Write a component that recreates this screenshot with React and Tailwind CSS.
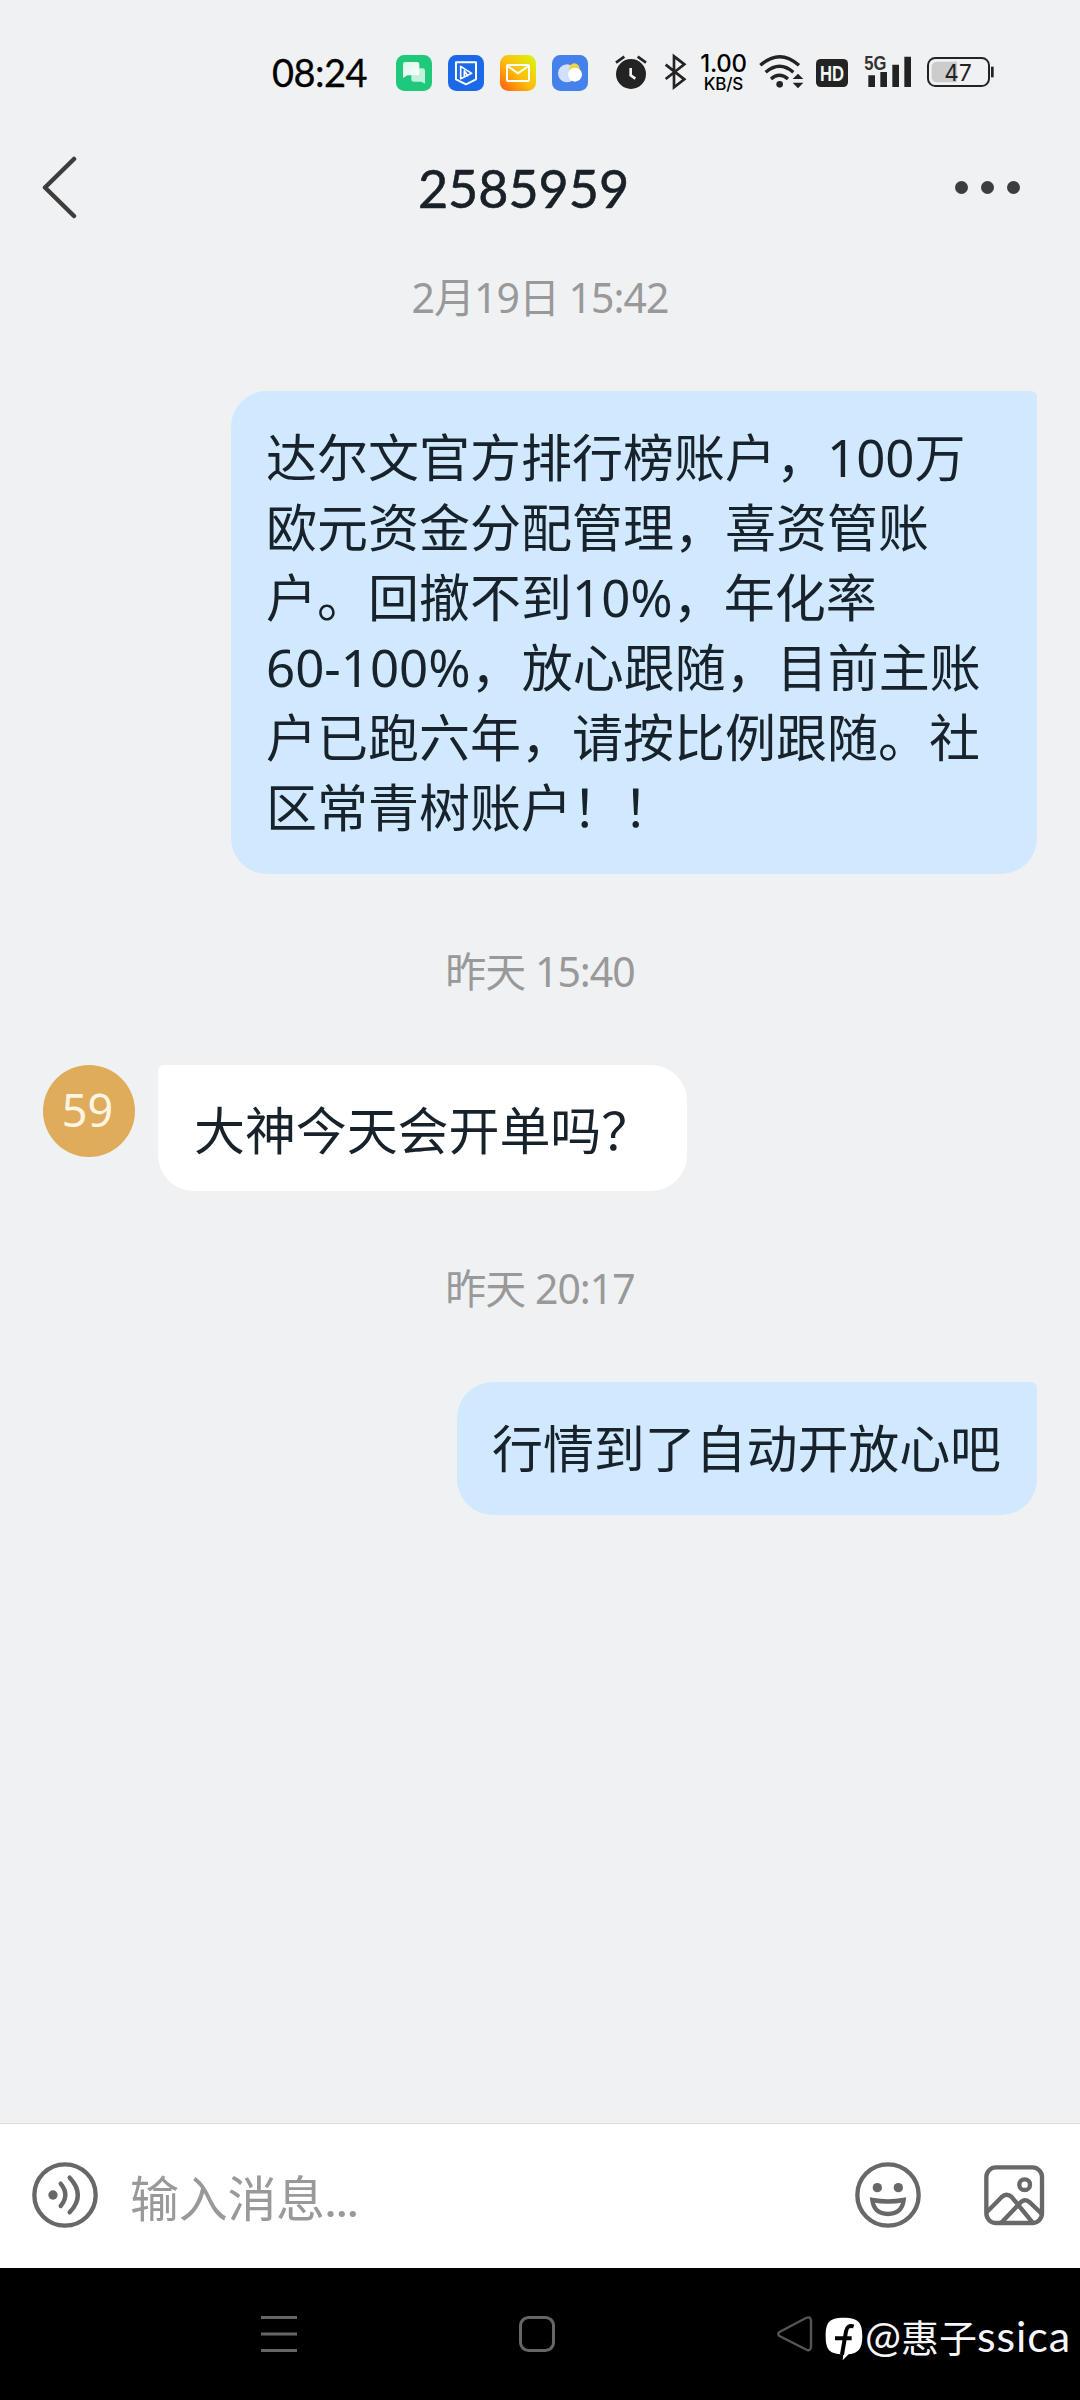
import React from 'react';

const StatusBar = () => (
  <div className="h-[70px] mt-[38px] pl-[272px] flex items-center shrink-0">
    <span className="w-[124px] pb-[2px] font-['Lato','Noto_Sans_CJK_SC',sans-serif] text-[38px] leading-none tracking-[-0.5px] text-black [-webkit-text-stroke:0.3px_#000] whitespace-nowrap">
      08:24
    </span>

    {/* Notification icons */}
    <div className="flex gap-4">
      <svg className="w-9 h-9" viewBox="0 0 108 108">
        <defs>
          <linearGradient id="bubble" x1="0" y1="0" x2="1" y2="1">
            <stop offset="0" stopColor="#d9f7e8" />
            <stop offset="1" stopColor="#fff" />
          </linearGradient>
        </defs>
        <rect width="108" height="108" rx="25" fill="#1fc97c" />
        <path d="M46 40h34q7 0 7 7v39l-11-6H52q-6 0-6-7z" fill="#c3f2dc" />
        <path d="M27 21h36q7 0 7 7v26q0 7-7 7H34l-13 8V28q0-7 6-7z" fill="url(#bubble)" />
      </svg>
      <svg className="w-9 h-9" viewBox="0 0 108 108">
        <rect width="108" height="108" rx="25" fill="#1b68e8" />
        <path d="M24 22h60v51L54 88 24 73z" fill="none" stroke="#fff" strokeWidth="6" strokeLinejoin="round" />
        <path d="M38 34l33 21-33 16zM49 48v18M48 46l12 18" fill="none" stroke="#fff" strokeWidth="5" strokeLinejoin="round" />
      </svg>
      <svg className="w-9 h-9" viewBox="0 0 108 108">
        <defs>
          <linearGradient id="mail" x1="0" y1="1" x2="1" y2="0">
            <stop offset="0" stopColor="#ff5a0c" />
            <stop offset="0.45" stopColor="#ffb90c" />
            <stop offset="1" stopColor="#d6fa10" />
          </linearGradient>
        </defs>
        <rect width="108" height="108" rx="25" fill="url(#mail)" />
        <rect x="21" y="30" width="66" height="48" rx="4" fill="none" stroke="#fff" strokeWidth="6" />
        <path d="M24 34l30 21 30-21" fill="none" stroke="#fff" strokeWidth="6" />
      </svg>
      <svg className="w-9 h-9" viewBox="0 0 108 108">
        <rect width="108" height="108" rx="25" fill="#4481ea" />
        <circle cx="45" cy="55" r="27" fill="#d3e0fb" />
        <circle cx="67" cy="41" r="16" fill="#ead649" />
        <circle cx="69" cy="59" r="21" fill="#fff" />
      </svg>
    </div>

    {/* System icons */}
    <svg className="w-[36px] h-[70px] ml-[25px]" viewBox="39 -6 108 210">
      <circle cx="93" cy="102" r="45" fill="#232323" />
      <path d="M48 68l25-18M113 50l25 18" stroke="#232323" strokeWidth="8" />
      <path d="M92 84v22l14 10" fill="none" stroke="#eff1f3" strokeWidth="8" />
    </svg>
    <svg className="w-[25px] h-[70px] ml-[14px]" viewBox="189 -6 75 210">
      <path d="M197 74l56 44-31 24V49l31 24-56 44" fill="none" stroke="#232323" strokeWidth="8" />
    </svg>
    <div className="w-[49px] ml-[11px] text-center font-['Inter',sans-serif] font-medium text-black">
      <div className="text-[24px] leading-[22px] tracking-[-0.3px]">1.00</div>
      <div className="text-[17px] leading-[18px] tracking-[-0.2px]">KB/S</div>
    </div>
    <svg className="w-[45px] h-[70px] ml-[11px]" viewBox="477 -6 135 210">
      <g fill="none" stroke="#232323" strokeWidth="10">
        <path d="M481 76q58-52 116 0" />
        <path d="M497 97q42-36 83 0" />
        <path d="M513 117q25-22 51 0" />
      </g>
      <circle cx="539" cy="133" r="10" fill="#232323" />
      <path d="M578 117l16-16 16 16zM578 128h32l-16 17z" fill="#232323" />
    </svg>
    <svg className="w-[34px] h-[70px] ml-[11px]" viewBox="645 -6 102 210">
      <rect x="648" y="57" width="96" height="84" rx="14" fill="#232323" />
      <g transform="translate(660 122) scale(0.78 1)">
        <text fontSize="64" fontWeight="bold" fontFamily="Liberation Sans" fill="#f4f5f6">HD</text>
      </g>
    </svg>
    <svg className="w-[48px] h-[70px] ml-[15px]" viewBox="792 -6 144 210">
      <g transform="translate(793 89) scale(0.86 1)">
        <text fontSize="58" fontWeight="bold" fontFamily="Liberation Sans" fill="#333">5G</text>
      </g>
      <path d="M805 106h20v35h-20zM841 96h20v45h-20zM877 74h20v67h-20zM913 50h20v91h-20z" fill="#232323" />
    </svg>
    <svg className="w-[69px] h-[70px] ml-[14px]" viewBox="978 -6 207 210">
      <rect x="984" y="54" width="183" height="84" rx="22" fill="none" stroke="#232323" strokeWidth="6" />
      <path d="M1012 65h59v62h-59q-17 0-17-17V82q0-17 17-17z" fill="#ccc" />
      <path d="M1177 80v32" stroke="#232323" strokeWidth="8" />
      <text x="1033" y="122" textLength="82" lengthAdjust="spacingAndGlyphs" fontSize="70" fontFamily="Inter" fill="#222">47</text>
    </svg>
  </div>
);

const Header = () => (
  <div className="h-[156px] pt-[2px] flex items-center shrink-0">
    <svg className="w-[36px] h-[64px] ml-[41px]" viewBox="0 0 36 64" fill="none" stroke="#3d3d3d" strokeWidth="4.500">
      <path d="M33 4L4 32.500L33 61" strokeLinecap="round" strokeLinejoin="round" />
    </svg>
    <h1 className="flex-1 pl-[15px] pt-[2px] text-center font-['Lato','Noto_Sans_CJK_SC',sans-serif] text-[52px] leading-none text-[#192028] [-webkit-text-stroke:0.6px_#192028]">
      2585959
    </h1>
    <div className="flex gap-[13px] mr-[60px]">
      <span className="w-[13px] h-[13px] rounded-full bg-[#3d3d3d]" />
      <span className="w-[13px] h-[13px] rounded-full bg-[#3d3d3d]" />
      <span className="w-[13px] h-[13px] rounded-full bg-[#3d3d3d]" />
    </div>
  </div>
);

const TimeLabel = ({ children, className }) => (
  <div className={`h-[60px] pt-[2px] flex items-center justify-center font-['Noto_Sans','Noto_Sans_CJK_SC',sans-serif] text-[41px] tracking-[-1px] font-normal text-[#999] whitespace-nowrap ${className}`}>
    {children}
  </div>
);

const lines = [
  '达尔文官方排行榜账户，100万',
  '欧元资金分配管理，喜资管账',
  '户。回撤不到10%，年化率',
  '60-100%，放心跟随，目前主账',
  '户已跑六年，请按比例跟随。社',
  '区常青树账户！！',
];

const Conversation = () => (
  <div className="flex-1 flex flex-col text-[#18222b] font-['Noto_Sans','Noto_Sans_CJK_SC',sans-serif] text-[51px]">
    <TimeLabel className="mt-[3px]">2月19日 15:42</TimeLabel>

    <div className="self-end mt-[64px] mr-[43px] w-[806px] h-[483px] pl-[35px] pt-[31px] rounded-[36px] rounded-tr-[6px] bg-[#d1e9ff] whitespace-nowrap">
      {lines.map((line) => (
        <p key={line} className="h-[70px] leading-[70px]">{line}</p>
      ))}
    </div>

    <TimeLabel className="mt-[67px]">昨天 15:40</TimeLabel>

    <div className="flex mt-[64px] ml-[43px]">
      <div className="w-[92px] h-[92px] pr-[3px] pb-[3px] rounded-full bg-[#dfac5b] text-[#fff4e2] text-[45px] leading-none flex items-center justify-center">
        59
      </div>
      <div className="ml-[23px] w-[529px] h-[126px] pl-[36px] rounded-[36px] rounded-tl-[6px] bg-white leading-[131px] tracking-[-0.1px] whitespace-nowrap">
        大神今天会开单吗？
      </div>
    </div>

    <TimeLabel className="mt-[67px]">昨天 20:17</TimeLabel>

    <div className="self-end mt-[64px] mr-[43px] w-[580px] h-[133px] pl-[35px] rounded-[36px] rounded-tr-[6px] bg-[#d1e9ff] leading-[132px] tracking-[-0.1px] whitespace-nowrap">
      行情到了自动开放心吧
    </div>
  </div>
);

const InputBar = () => (
  <div className="h-[145px] shrink-0 flex items-center bg-white border-t border-[#dadada] pl-[32px] pr-[32px] pb-[2px]">
    <svg className="w-[66px] h-[66px]" viewBox="0 0 198 198" fill="none" stroke="#686868" strokeWidth="13" strokeLinecap="round">
      <circle cx="99" cy="99" r="92" />
      <circle cx="63" cy="99" r="14" fill="#686868" stroke="none" />
      <path d="M86 65q28 34 0 67M113 47q49 52 0 104" />
    </svg>
    <span className="flex-1 ml-[32px] pt-[3px] font-['Noto_Sans_CJK_SC',sans-serif] text-[49px] leading-[60px] tracking-[-0.3px] text-[#999]">
      输入消息<span className="font-['Lato',sans-serif] tracking-[-0.5px]">...</span>
    </span>
    <svg className="w-[66px] h-[66px]" viewBox="0 0 198 198" fill="none" stroke="#686868" strokeWidth="13">
      <circle cx="99" cy="99" r="92" />
      <circle cx="67" cy="77" r="14" fill="#686868" stroke="none" />
      <circle cx="130" cy="77" r="14" fill="#686868" stroke="none" />
      <path d="M52 114q47 9 94 0q-5 41-47 42q-42-1-47-42z" />
    </svg>
    <svg className="w-[66px] h-[66px] ml-[60px] mr-[1px]" viewBox="0 0 198 198" fill="none" stroke="#686868" strokeWidth="13">
      <rect x="16" y="16" width="167" height="167" rx="29" />
      <circle cx="131" cy="68" r="16" />
      <path d="M17 151l45-46q15-13 30 0l63 77M61 182l59-62q12-10 25 0l39 37" />
    </svg>
  </div>
);

const NavBar = () => (
  <div className="h-[132px] shrink-0 flex items-center bg-black pl-[261px]">
    <svg className="w-[36px] h-[36px]" viewBox="0 0 36 36" stroke="#666" strokeWidth="3">
      <path d="M0 1.500H36M0 18H36M0 34.500H36" />
    </svg>
    <svg className="w-[36px] h-[36px] ml-[222px]" viewBox="0 0 36 36" fill="none" stroke="#666" strokeWidth="3">
      <rect x="1.500" y="1.500" width="33" height="33" rx="8" />
    </svg>
    <svg className="w-[36px] h-[36px] ml-[222px]" viewBox="0 0 36 36" fill="none" stroke="#555" strokeWidth="2.400" strokeLinejoin="round">
      <path d="M2.500 16L29 2Q34 0 34 5V30Q34 36 29 33.500L2.500 20Q0 18 2.500 16z" />
    </svg>

    {/* Watermark */}
    <div className="flex items-center ml-[12px] pt-[5px]">
      <svg className="w-[38px] h-[44px] mt-[5px]" viewBox="0 0 114 132">
        <path d="M56 2C99 2 112 15 112 58C112 94 101 109 71 112L53 130L55 112C14 112 2 99 2 58C2 15 13 2 56 2z" fill="#fff" />
        <path d="M86 28Q67 22 63 43L51 113M30 64H80" fill="none" stroke="#000" strokeWidth="12" />
      </svg>
      <span className="ml-[2px] font-['Lato','Noto_Sans_CJK_SC',sans-serif] text-[43px] leading-[60px] text-[#f6f6fa] whitespace-nowrap">
        @<span className="text-[38px]">惠子</span><span className="tracking-[0.9px]">ssica</span>
      </span>
    </div>
  </div>
);

const App = () => {
  return (
    <div className="w-[1080px] h-[2400px] flex flex-col bg-[#eff1f3] overflow-hidden">
      <StatusBar />
      <Header />
      <Conversation />
      <InputBar />
      <NavBar />
    </div>
  );
};

export default App;
